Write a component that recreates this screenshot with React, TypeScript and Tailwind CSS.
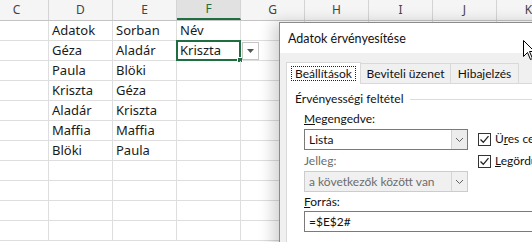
const cols = ['C', 'D', 'E', 'F', 'G', 'H', 'I', 'J', 'K', 'L'];

const rows: string[][] = [
  ['', 'Adatok', 'Sorban', 'Név'],
  ['', 'Géza', 'Aladár', 'Kriszta'],
  ['', 'Paula', 'Blöki', ''],
  ['', 'Kriszta', 'Géza', ''],
  ['', 'Aladár', 'Kriszta', ''],
  ['', 'Maffia', 'Maffia', ''],
  ['', 'Blöki', 'Paula', ''],
  ['', '', '', ''],
  ['', '', '', ''],
  ['', '', '', ''],
  ['', '', '', ''],
];

function Chevron() {
  return (
    <svg width="9" height="6" viewBox="0 0 9 6">
      <path d="M1 1 L4.5 4.5 L8 1" fill="none" stroke="#606060" strokeWidth="1" />
    </svg>
  );
}

function Check() {
  return (
    <div className="w-[13px] h-[13px] border border-[#333] bg-white flex items-center justify-center">
      <svg width="11" height="11" viewBox="0 0 11 11">
        <path d="M1.5 5.5 L4.3 8.3 L9.5 2.2" fill="none" stroke="#222" strokeWidth="1.3" />
      </svg>
    </div>
  );
}

function Sheet() {
  return (
    <div className="ml-[-15px] w-[640px]" style={{ fontFamily: '"Noto Sans", sans-serif' }}>
      <div className="flex h-[21px] border-b border-[#c4c4c4] bg-[#f5f5f5]">
        {cols.map((c) => (
          <div
            key={c}
            className={
              c === 'F'
                ? 'w-[64px] shrink-0 border-r border-[#d4d4d4] bg-[#e1e1e1] border-b-2 border-b-[#1e6e42] text-[#1e6e42] text-[12px] flex items-center justify-center'
                : 'w-[64px] shrink-0 border-r border-[#d4d4d4] text-[#444] text-[12px] flex items-center justify-center'
            }
          >
            {c}
          </div>
        ))}
      </div>
      {rows.map((r, i) => (
        <div key={i} className="flex h-[20px] border-b border-[#dedede]">
          {cols.map((c, j) => (
            <div
              key={c}
              className="relative w-[64px] shrink-0 border-r border-[#dedede] text-[13px] text-[#1a1a1a] pl-[3px] flex items-center"
            >
              {r[j] ?? ''}
              {i === 1 && c === 'F' && (
                <div className="absolute left-[-1px] top-[-1px] w-[65px] h-[21px] border-2 border-[#1e6e42]">
                  <div className="absolute right-[-4px] bottom-[-4px] w-[6px] h-[6px] bg-[#1e6e42] border border-white" />
                </div>
              )}
              {i === 1 && c === 'G' && (
                <div className="absolute left-[1px] top-[1px] w-[17px] h-[18px] border border-[#c6c6c6] bg-white flex items-center justify-center">
                  <svg width="7" height="4" viewBox="0 0 7 4">
                    <path d="M0 0 L7 0 L3.5 4 Z" fill="#555" />
                  </svg>
                </div>
              )}
            </div>
          ))}
        </div>
      ))}
    </div>
  );
}

function Dialog() {
  return (
    <div
      className="absolute left-[279px] top-[22px] w-[300px] h-[240px] bg-[#f0f0f0] border border-[#8a8a8a] shadow-[-6px_0_14px_rgba(0,0,0,0.18)] text-[12px] text-[#111]"
      style={{ fontFamily: 'Lato, "Noto Sans", sans-serif' }}
    >
      <div className="h-[30px] bg-white flex items-center pl-[8px] pt-[2px] text-[12.5px]">Adatok érvényesítése</div>
      <div className="pl-[6px] pt-[8px]">
        <div className="flex items-end h-[22px]">
          <div className="h-[22px] w-[75px] bg-white border border-[#d9d9d9] border-b-0 flex items-center justify-center relative z-10 mb-[-1px]">
            <span className="border border-dotted border-[#222] px-[3px] leading-[13px]">Beállítások</span>
          </div>
          <div className="h-[20px] w-[90px] border border-[#d9d9d9] border-l-0 border-b-0 flex items-center justify-center">Beviteli üzenet</div>
          <div className="h-[20px] w-[68px] border border-[#d9d9d9] border-l-0 border-b-0 flex items-center justify-center">Hibajelzés</div>
        </div>
        <div className="bg-white border border-[#d9d9d9] h-[200px] pl-[8px] pt-[7px]">
          <div className="flex items-center gap-[6px] h-[16px]">
            <span>Érvényességi feltétel</span>
            <div className="flex-1 h-px bg-[#dcdcdc]" />
          </div>
          <div className="flex pl-[9px] mt-[3px]">
            <div className="w-[164px] shrink-0">
              <div className="h-[18px] flex items-center"><span><u>M</u>egengedve:</span></div>
              <div className="h-[21px] mt-[1px] border border-[#7a7a7a] bg-white flex">
                <div className="flex-1 flex items-center pl-[4px]">Lista</div>
                <div className="w-[16px] border-l border-[#d0d0d0] bg-[#ececec] flex items-center justify-center"><Chevron /></div>
              </div>
              <div className="h-[20px] flex items-center text-[#6d6d6d] mt-[1px]">Jelleg:</div>
              <div className="h-[21px] border border-[#cccccc] bg-[#f0f0f0] flex text-[#6d6d6d]">
                <div className="flex-1 flex items-center pl-[4px]">a következők között van</div>
                <div className="w-[16px] border-l border-[#d6d6d6] flex items-center justify-center"><Chevron /></div>
              </div>
            </div>
            <div className="pl-[10px] pt-[20px] flex flex-col gap-[4px]">
              <div className="flex items-center gap-[4px] whitespace-nowrap"><Check /><span>Ü<u>r</u>es cellák mellőzése</span></div>
              <div className="flex items-center gap-[4px] whitespace-nowrap"><Check /><span><u>L</u>egördülő lista</span></div>
            </div>
          </div>
          <div className="pl-[9px]">
            <div className="h-[19px] flex items-center"><span><u>F</u>orrás:</span></div>
            <div className="h-[21px] border border-[#7a7a7a] bg-white flex items-center pl-[4px]">=$E$2#</div>
          </div>
        </div>
      </div>
    </div>
  );
}

export default function App() {
  return (
    <div className="relative w-[532px] h-[242px] overflow-hidden bg-white">
      <Sheet />
      <Dialog />
      <svg className="absolute left-[523px] top-[40px]" width="14" height="22" viewBox="0 0 14 22">
        <path d="M0.5 0.5 L0.5 16.5 L4.5 12.5 L7.5 19.5 L9.5 18.5 L6.5 11.5 L11.5 11.5 Z" fill="white" stroke="black" strokeWidth="1" />
      </svg>
    </div>
  );
}
